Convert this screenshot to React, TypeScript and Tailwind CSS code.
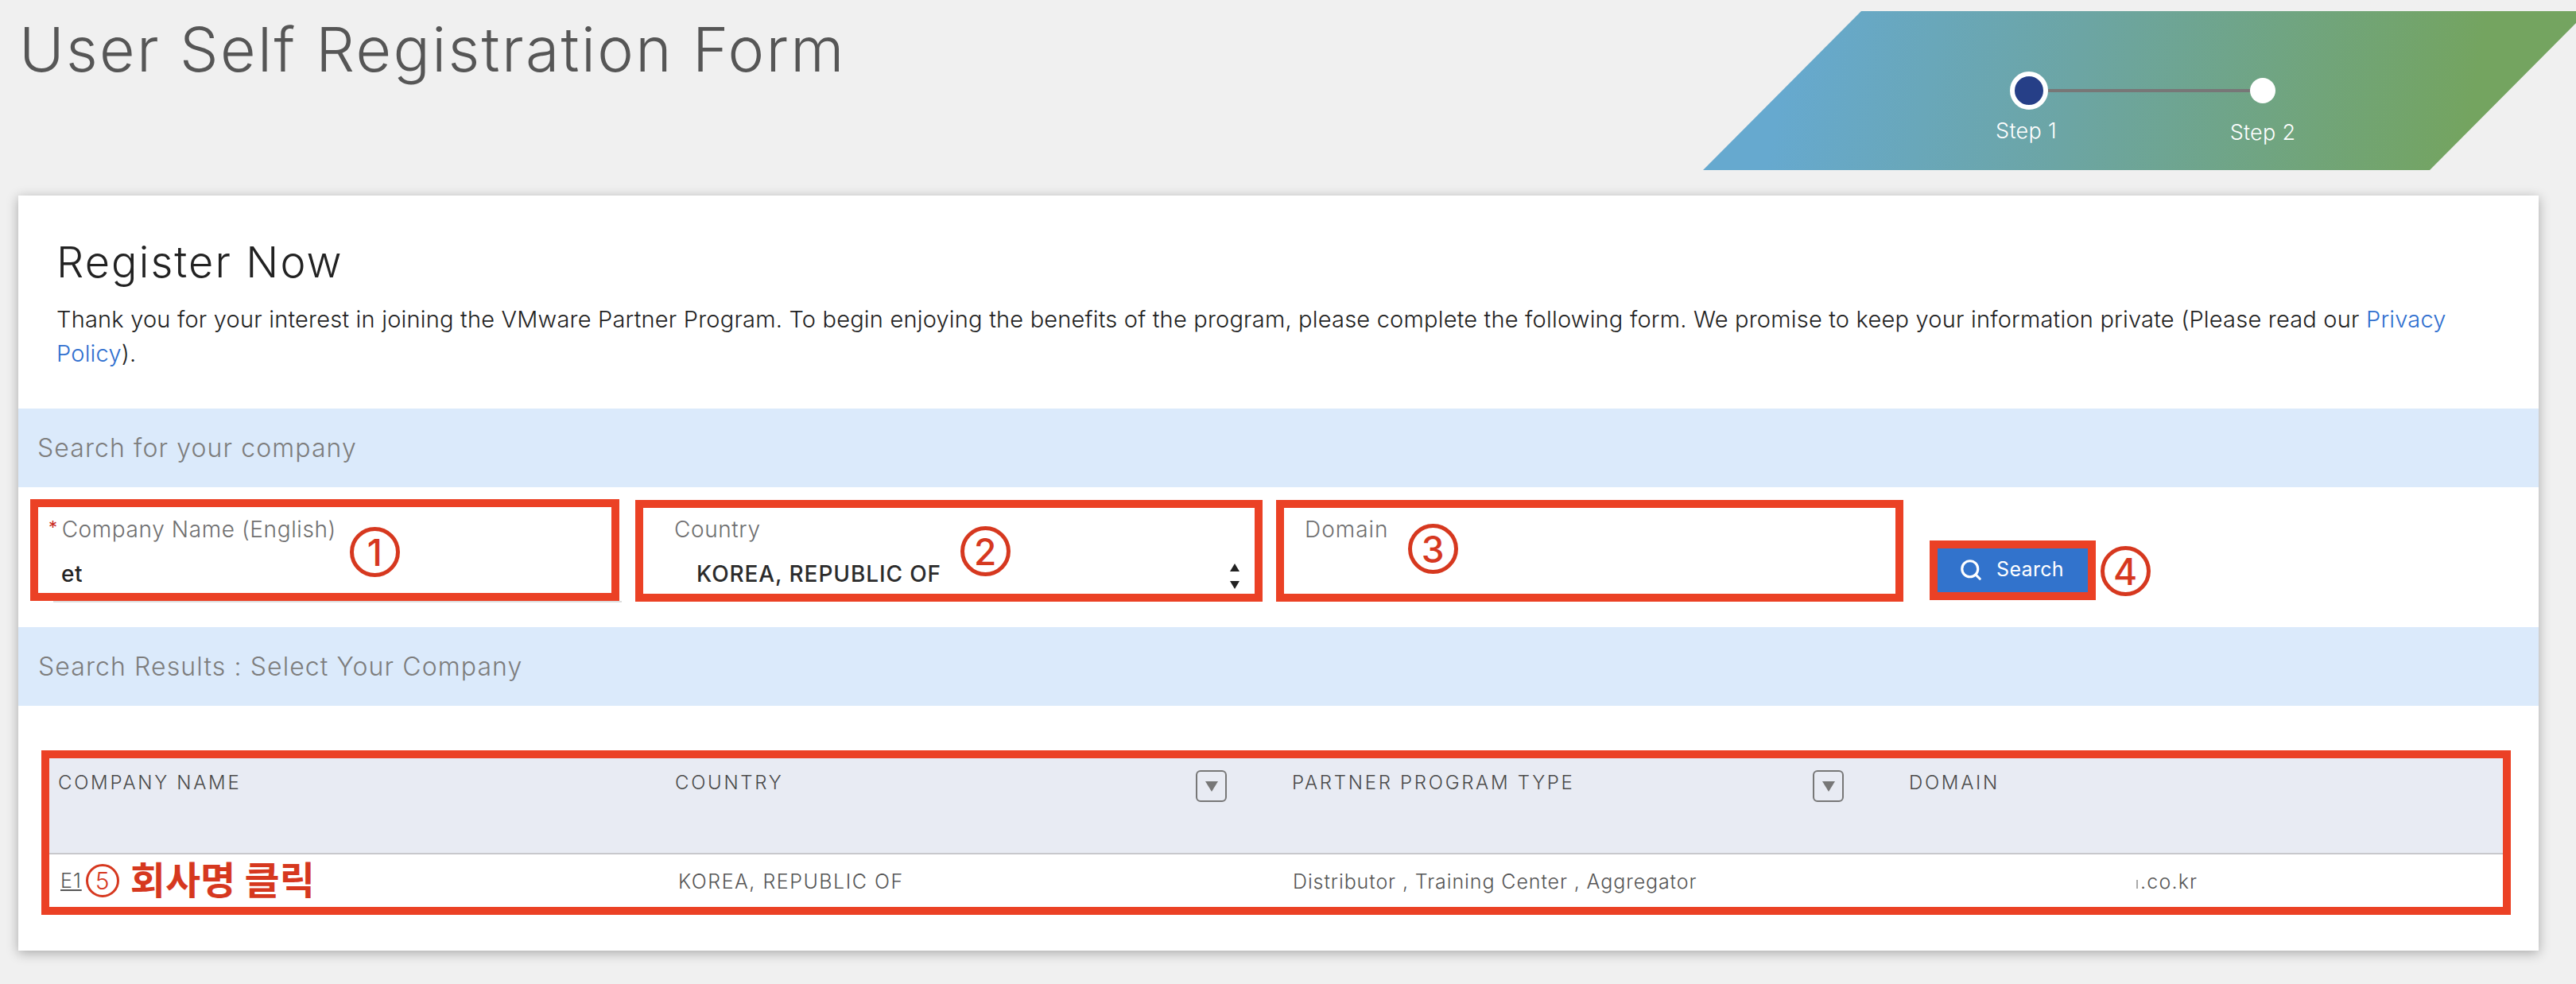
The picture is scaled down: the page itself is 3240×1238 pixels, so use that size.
import { Search } from "lucide-react";

function Circled({ n, className }: { n: string; className: string }) {
  return (
    <div className={`absolute flex h-[63px] w-[63px] items-center justify-center rounded-full border-[5px] border-[#d6381f] text-[46px] leading-none font-medium text-[#d6381f] ${className}`}>
      {n}
    </div>
  );
}

function FilterButton() {
  return (
    <div className="flex h-[40px] w-[39px] shrink-0 items-center justify-center rounded-md border-2 border-[#777] bg-[#e8ebf3]">
      <svg width="16" height="13" viewBox="0 0 16 13"><path d="M0 0h16l-8 13z" fill="#777" /></svg>
    </div>
  );
}

export default function App() {
  return (
    <div className="h-[1238px] w-[3240px] overflow-hidden bg-[#f0f0f0] [font-family:Inter,'Noto_Sans_CJK_KR',sans-serif]">
      <header className="flex h-[246px] items-start justify-between">
        <h1 className="pt-[24px] pl-[24px] text-[77px] leading-none font-light tracking-[2.35px] whitespace-nowrap text-[#565656]">User Self Registration Form</h1>
        <div className="mt-[14px] mr-[-15px] flex h-[200px] w-[1113px] shrink-0 flex-col bg-[linear-gradient(100deg,#66a9cf_10%,#6ca5a4_42%,#74a460_86%)] pt-[76px] pl-[386px] [clip-path:polygon(199px_0,100%_0,914px_100%,0_100%)]">
          <div className="flex items-center">
            <div className="h-[48px] w-[48px] rounded-full border-[6px] border-white bg-[#263f87]" />
            <div className="h-[4px] w-[254px] bg-[#777]" />
            <div className="h-[32px] w-[32px] rounded-full bg-white" />
          </div>
          <div className="mt-[10px] flex text-[27px] leading-[34px] font-light tracking-[0.3px] text-white">
            <div className="flex w-[48px] justify-center whitespace-nowrap"><span className="mr-[7px]">Step 1</span></div>
            <div className="ml-[254px] flex w-[32px] justify-center pt-[2px] whitespace-nowrap"><span>Step 2</span></div>
          </div>
        </div>
      </header>

      <main className="ml-[23px] h-[950px] w-[3170px] bg-white shadow-[0_3px_14px_rgba(0,0,0,0.3)]">
        <section className="h-[268px] pt-[57px] pl-[48px]">
          <h2 className="text-[54px] leading-none font-light tracking-[2.1px] text-[#222]">Register Now</h2>
          <p className="mt-[23px] w-[3060px] text-[29px] leading-[43px] font-light tracking-[0.2px] text-[#222]">
            Thank you for your interest in joining the VMware Partner Program. To begin enjoying the benefits of the program, please complete the following form. We promise to keep your information private (Please read our <a className="text-[#2f6fcf]">Privacy Policy</a>).
          </p>
        </section>

        <div className="flex h-[99px] items-center bg-[#dbeafb] pl-[24px] text-[32px] font-light tracking-[1.1px] text-[#7d7d7d]">Search for your company</div>

        <form className="flex h-[176px] items-start text-[28px] leading-none font-light tracking-[0.6px] text-[#6f6f70]">
          <div className="relative mt-[15px] ml-[15px] h-[128px] w-[741px] border-[10px] border-[#eb4125] pt-[14px] pl-[13px]">
            <div className="flex items-start"><span className="mr-[5px] text-[22px] font-normal text-[#c92a1e]">*</span><span>Company Name (English)</span></div>
            <div className="mt-[28px] ml-[16px] font-medium text-[#222]">et</div>
            <Circled n="1" className="top-[25px] left-[392px]" />
            <div className="absolute top-[118px] left-[19px] h-[2px] w-[715px] bg-[#ddd]" />
          </div>
          <div className="relative mt-[16px] ml-[20px] h-[128px] w-[789px] border-[10px] border-[#eb4125] pt-[13px] pl-[39px]">
            <div>Country</div>
            <div className="mt-[28px] ml-[28px] font-medium tracking-[0.9px] text-[#2b2b2b]">KOREA, REPUBLIC OF</div>
            <Circled n="2" className="top-[23px] left-[399px]" />
            <svg className="absolute top-[70px] right-[19px]" width="12" height="32" viewBox="0 0 12 32" fill="#222"><path d="M6 0l6 10H0zM0 22h12l-6 10z" /></svg>
          </div>
          <div className="relative mt-[16px] ml-[17px] h-[128px] w-[789px] border-[10px] border-[#eb4125] pt-[13px] pl-[26px]">
            <div className="tracking-[1px]">Domain</div>
            <Circled n="3" className="top-[20px] left-[156px]" />
          </div>
          <div className="relative mt-[67px] ml-[33px] h-[75px] w-[209px] border-[10px] border-[#eb4125] bg-[#3273cc]">
            <div className="flex h-full items-center justify-center gap-[17px] pr-[3px] pb-[2px] text-[25px] font-normal tracking-[0.3px] text-white">
              <Search size={30} strokeWidth={2.5} />
              <span>Search</span>
            </div>
            <Circled n="4" className="top-[-3px] left-[205px]" />
          </div>
        </form>

        <div className="flex h-[99px] items-center bg-[#dbeafb] pl-[25px] text-[32px] font-light tracking-[1.1px] text-[#7d7d7d]">Search Results : Select Your Company</div>

        <div className="mt-[56px] ml-[29px] h-[207px] w-[3106px] border-[10px] border-[#eb4125]">
          <div className="grid h-[121px] grid-cols-[787px_776px_776px_1fr] border-b-2 border-[#c8c8cc] bg-[#e8ebf3] pt-[15px] text-[24px] leading-none font-light tracking-[2.7px] text-[#4a4a4a]">
            <div className="pt-[4px] pl-[11px]">COMPANY NAME</div>
            <div className="flex items-start justify-between pr-[82px]"><span className="pt-[4px]">COUNTRY</span><FilterButton /></div>
            <div className="flex items-start justify-between pr-[82px]"><span className="pt-[4px]">PARTNER PROGRAM TYPE</span><FilterButton /></div>
            <div className="pt-[4px]">DOMAIN</div>
          </div>
          <div className="grid h-[66px] grid-cols-[787px_776px_776px_1fr] items-center text-[25px] leading-none font-light text-[#565656]">
            <div className="flex items-center pl-[14px]">
              <span className="tracking-[1px] underline">E1</span>
              <div className="ml-[5px] flex h-[42px] w-[42px] items-center justify-center rounded-full border-[3px] border-[#d6381f] text-[30px] text-[#d6381f]">5</div>
              <span className="ml-[14px] text-[48px] font-bold text-[#d6381f]">회사명 클릭</span>
            </div>
            <div className="pt-[3px] pl-[4px] tracking-[1.5px]">KOREA, REPUBLIC OF</div>
            <div className="pt-[3px] pl-[1px] tracking-[0.9px]">Distributor , Training Center , Aggregator</div>
            <div className="flex items-end pt-[3px] pl-[286px] tracking-[1.2px]"><div className="mr-[3px] mb-[4px] h-[11px] w-[2px] bg-[#aaa]" /><span>.co.kr</span></div>
          </div>
        </div>
      </main>
    </div>
  );
}
